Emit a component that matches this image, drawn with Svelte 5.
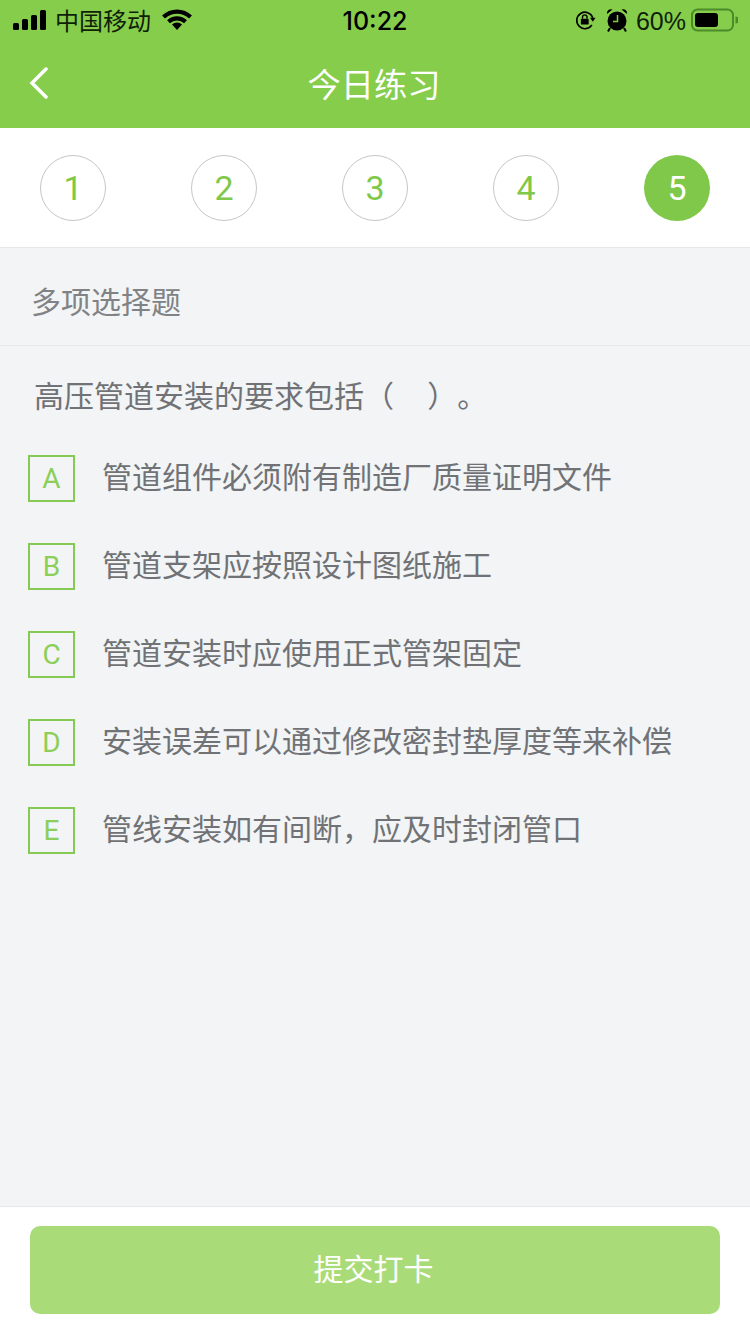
<script>
    const steps = [1, 2, 3, 4, 5];
    const current = 5;

    const options = [
        { key: 'A', text: '管道组件必须附有制造厂质量证明文件' },
        { key: 'B', text: '管道支架应按照设计图纸施工' },
        { key: 'C', text: '管道安装时应使用正式管架固定' },
        { key: 'D', text: '安装误差可以通过修改密封垫厚度等来补偿' },
        { key: 'E', text: '管线安装如有间断，应及时封闭管口' }
    ];
</script>

<div class="page">
    <header class="top">
        <div class="status">
            <div class="status-left">
                <svg class="signal" width="34" height="20" viewBox="0 0 34 20" fill="#000">
                    <rect x="0" y="13" width="6" height="7" rx="1.5"></rect>
                    <rect x="9" y="9" width="6" height="11" rx="1.5"></rect>
                    <rect x="18" y="5" width="6" height="15" rx="1.5"></rect>
                    <rect x="27" y="0" width="6" height="20" rx="1.5"></rect>
                </svg>
                <span class="carrier">中国移动</span>
                <svg class="wifi" width="30" height="22" viewBox="0 0 30 22">
                    <path d="M1.5 8 A19.5 19.5 0 0 1 28.500 8" fill="none" stroke="#000" stroke-width="4.200"></path>
                    <path d="M6.500 12.800 A12.500 12.500 0 0 1 23.500 12.800" fill="none" stroke="#000" stroke-width="4.200"></path>
                    <path d="M10 15.500 A7.500 7.500 0 0 1 20 15.500 L15 21 Z" fill="#000"></path>
                </svg>
            </div>
            <span class="time">10:22</span>
            <div class="status-right">
                <svg class="lock" width="22" height="22" viewBox="0 0 24 24">
                    <path d="M20.500 9.500 A9 9 0 1 0 19.500 17.500" fill="none" stroke="#000" stroke-width="1.800"></path>
                    <path d="M17.500 9.500 L23.500 9.500 L20.500 14 Z" fill="#000"></path>
                    <rect x="7.500" y="10.500" width="8.500" height="6.500" rx="1" fill="#000"></rect>
                    <path d="M9.300 10.500 V8.800 A2.450 2.450 0 0 1 14.200 8.800 V10.500" fill="none" stroke="#000" stroke-width="1.500"></path>
                </svg>
                <svg class="alarm" width="22" height="24" viewBox="0 0 22 24">
                    <circle cx="11" cy="13" r="9.500" fill="#000"></circle>
                    <path d="M1 6 A4 4 0 0 1 6.500 1.500 Z M21 6 A4 4 0 0 0 15.500 1.500 Z" fill="#000"></path>
                    <path d="M4 20 L2 23.500 M18 20 L20 23.500" stroke="#000" stroke-width="2"></path>
                    <path d="M11.500 7 V13.500 H7" fill="none" stroke="#86cd4b" stroke-width="1.500"></path>
                </svg>
                <span class="percent">60%</span>
                <svg class="battery" width="48" height="24" viewBox="0 0 48 24">
                    <rect x="2" y="1.500" width="41" height="21" rx="5.500" fill="none" stroke="#4c8a2a" stroke-width="2"></rect>
                    <rect x="5" y="5" width="23" height="14" rx="3" fill="#000"></rect>
                    <path d="M45.500 8.500 A3.500 3.500 0 0 1 45.500 15.500 Z" fill="#4c8a2a"></path>
                </svg>
            </div>
        </div>
        <div class="nav">
            <svg class="back" width="20" height="32" viewBox="0 0 20 32">
                <path d="M17 2 L3 16 L17 30" fill="none" stroke="#fff" stroke-width="3.500" stroke-linecap="round"></path>
            </svg>
            <h1>今日练习</h1>
        </div>
    </header>

    <nav class="steps">
        {#each steps as step}
            <div class="step" class:active={step === current}>{step}</div>
        {/each}
    </nav>

    <main class="body">
        <div class="kind">多项选择题</div>
        <p class="question">高压管道安装的要求包括（&nbsp;&nbsp;&nbsp;&nbsp;）。</p>
        <ul class="options">
            {#each options as option}
                <li>
                    <span class="letter">{option.key}</span>
                    <span class="text">{option.text}</span>
                </li>
            {/each}
        </ul>
    </main>

    <footer class="foot">
        <button class="submit">提交打卡</button>
    </footer>
</div>

<style>
    :global(body) {
        margin: 0;
    }

    .page {
        width: 750px;
        height: 1334px;
        display: flex;
        flex-direction: column;
        background: #f2f4f6;
        font-family: "Liberation Sans", "Noto Sans CJK SC", sans-serif;
        text-spacing-trim: space-all;
        overflow: hidden;
    }

    .top {
        height: 128px;
        flex-shrink: 0;
        background: #86cd4b;
    }

    .status {
        height: 40px;
        display: flex;
        align-items: center;
        justify-content: space-between;
        position: relative;
        padding: 0 12px 0 13px;
        color: #000;
    }
    .status-left,
    .status-right {
        display: flex;
        align-items: center;
    }
    .carrier {
        font-size: 24px;
        margin-left: 8px;
        padding-bottom: 2px;
        color: #0f1f08;
    }
    .wifi {
        margin-left: 11px;
    }
    .time {
        position: absolute;
        left: 0;
        right: 0;
        padding-top: 2px;
        text-align: center;
        font-family: Inter, "Liberation Sans", sans-serif;
        font-size: 25px;
        font-weight: 500;
    }
    .lock {
        margin-right: 10px;
    }
    .alarm {
        margin-right: 8px;
    }
    .percent {
        font-size: 25px;
        margin-right: 4px;
        padding-top: 2px;
        color: #0f1f08;
    }

    .nav {
        height: 88px;
        display: flex;
        align-items: center;
        justify-content: center;
        position: relative;
    }
    .back {
        position: absolute;
        left: 29px;
        top: 27px;
    }
    .nav h1 {
        margin: 0 2px 0 0;
        padding-bottom: 4px;
        font-size: 33.300px;
        font-weight: 400;
        color: #fff;
    }

    .steps {
        height: 119px;
        flex-shrink: 0;
        display: flex;
        align-items: center;
        justify-content: space-between;
        padding: 0 40px;
        background: #fff;
        border-bottom: 1px solid #e6e7e9;
    }
    .step {
        width: 66px;
        height: 66px;
        box-sizing: border-box;
        display: flex;
        align-items: center;
        justify-content: center;
        border: 1px solid #c6c6c6;
        border-radius: 50%;
        font-family: Roboto, "Liberation Sans", sans-serif;
        font-size: 34px;
        font-weight: 400;
        color: #7fc84a;
    }
    .step.active {
        border: none;
        background: #7fc84a;
        color: #fff;
    }

    .body {
        flex: 1;
    }

    .kind {
        height: 98px;
        box-sizing: border-box;
        padding: 7px 0 0 31px;
        display: flex;
        align-items: center;
        border-bottom: 1px solid #e6e7e9;
        font-size: 30px;
        color: #808285;
    }

    .question {
        margin: 35px 0 0 34px;
        font-size: 30px;
        line-height: 32px;
        color: #707275;
        white-space: nowrap;
    }

    .options {
        list-style: none;
        margin: 41px 0 0;
        padding: 0 0 0 28px;
        display: flex;
        flex-direction: column;
        gap: 40px;
    }
    .options li {
        display: flex;
        align-items: center;
        height: 48px;
    }
    .letter {
        width: 47px;
        height: 47px;
        box-sizing: border-box;
        display: flex;
        align-items: center;
        justify-content: center;
        border: 2px solid #86c955;
        font-family: Roboto, "Liberation Sans", sans-serif;
        font-size: 28px;
        font-weight: 400;
        color: #8ccf58;
    }
    .text {
        margin-left: 27px;
        padding-bottom: 7px;
        font-size: 30px;
        color: #707275;
        white-space: nowrap;
    }

    .foot {
        height: 128px;
        flex-shrink: 0;
        box-sizing: border-box;
        padding: 19px 30px 0;
        background: #fff;
        border-top: 1px solid #e6e7e9;
    }
    .submit {
        display: block;
        width: 100%;
        height: 88px;
        padding: 0 3px 6px 0;
        border: none;
        border-radius: 10px;
        background: #a9dc78;
        color: #fff;
        font-family: inherit;
        font-size: 30px;
    }
</style>
